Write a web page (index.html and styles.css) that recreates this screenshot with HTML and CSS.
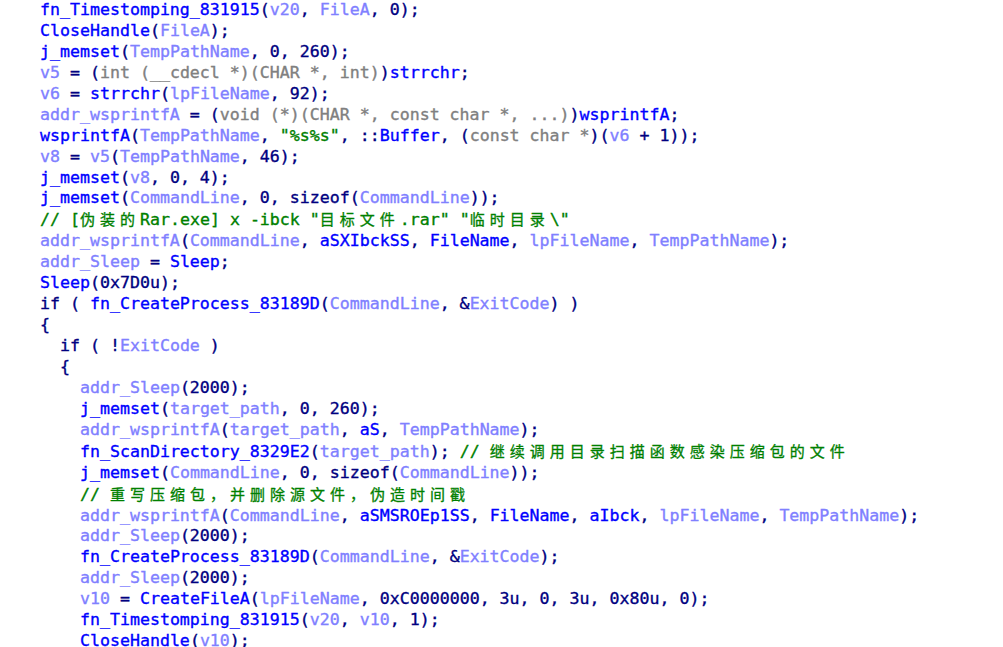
FILE: index.html
```html
<!DOCTYPE html>
<html>
<head>
<meta charset="utf-8">
<link rel="stylesheet" href="styles.css">
</head>
<body>
<pre class="code"><span class="b">fn_Timestomping_831915</span><span class="n">(</span><span class="v">v20</span><span class="n">, </span><span class="v">FileA</span><span class="n">, 0);</span>
<span class="b">CloseHandle</span><span class="n">(</span><span class="v">FileA</span><span class="n">);</span>
<span class="b">j_memset</span><span class="n">(</span><span class="v">TempPathName</span><span class="n">, 0, 260);</span>
<span class="v">v5</span><span class="n"> = (</span><span class="t">int (__cdecl *)(CHAR *, int)</span><span class="n">)</span><span class="b">strrchr</span><span class="n">;</span>
<span class="v">v6</span><span class="n"> = </span><span class="b">strrchr</span><span class="n">(</span><span class="v">lpFileName</span><span class="n">, 92);</span>
<span class="v">addr_wsprintfA</span><span class="n"> = (</span><span class="t">void (*)(CHAR *, const char *, ...)</span><span class="n">)</span><span class="b">wsprintfA</span><span class="n">;</span>
<span class="b">wsprintfA</span><span class="n">(</span><span class="v">TempPathName</span><span class="n">, </span><span class="s">"%s%s"</span><span class="n">, ::</span><span class="b">Buffer</span><span class="n">, (</span><span class="t">const char *</span><span class="n">)(</span><span class="v">v6</span><span class="n"> + 1));</span>
<span class="v">v8</span><span class="n"> = </span><span class="v">v5</span><span class="n">(</span><span class="v">TempPathName</span><span class="n">, 46);</span>
<span class="b">j_memset</span><span class="n">(</span><span class="v">v8</span><span class="n">, 0, 4);</span>
<span class="b">j_memset</span><span class="n">(</span><span class="v">CommandLine</span><span class="n">, 0, sizeof(</span><span class="v">CommandLine</span><span class="n">));</span>
<span class="c">// [<span class="z">伪装的</span>Rar.exe] x -ibck "<span class="z">目标文件</span>.rar" "<span class="z">临时目录</span>\"</span>
<span class="v">addr_wsprintfA</span><span class="n">(</span><span class="v">CommandLine</span><span class="n">, </span><span class="b">aSXIbckSS</span><span class="n">, </span><span class="b">FileName</span><span class="n">, </span><span class="v">lpFileName</span><span class="n">, </span><span class="v">TempPathName</span><span class="n">);</span>
<span class="v">addr_Sleep</span><span class="n"> = </span><span class="b">Sleep</span><span class="n">;</span>
<span class="b">Sleep</span><span class="n">(0x7D0u);</span>
<span class="n">if ( </span><span class="b">fn_CreateProcess_83189D</span><span class="n">(</span><span class="v">CommandLine</span><span class="n">, &amp;</span><span class="v">ExitCode</span><span class="n">) )</span>
<span class="n">{</span>
<span class="n">  if ( !</span><span class="v">ExitCode</span><span class="n"> )</span>
<span class="n">  {</span>
    <span class="v">addr_Sleep</span><span class="n">(2000);</span>
    <span class="b">j_memset</span><span class="n">(</span><span class="v">target_path</span><span class="n">, 0, 260);</span>
    <span class="v">addr_wsprintfA</span><span class="n">(</span><span class="v">target_path</span><span class="n">, </span><span class="b">aS</span><span class="n">, </span><span class="v">TempPathName</span><span class="n">);</span>
    <span class="b">fn_ScanDirectory_8329E2</span><span class="n">(</span><span class="v">target_path</span><span class="n">); </span><span class="c">// <span class="z">继续调用目录扫描函数感染压缩包的文件</span></span>
    <span class="b">j_memset</span><span class="n">(</span><span class="v">CommandLine</span><span class="n">, 0, sizeof(</span><span class="v">CommandLine</span><span class="n">));</span>
    <span class="c">// <span class="z">重写压缩包，并删除源文件，伪造时间戳</span></span>
    <span class="v">addr_wsprintfA</span><span class="n">(</span><span class="v">CommandLine</span><span class="n">, </span><span class="b">aSMSROEp1SS</span><span class="n">, </span><span class="b">FileName</span><span class="n">, </span><span class="b">aIbck</span><span class="n">, </span><span class="v">lpFileName</span><span class="n">, </span><span class="v">TempPathName</span><span class="n">);</span>
    <span class="v">addr_Sleep</span><span class="n">(2000);</span>
    <span class="b">fn_CreateProcess_83189D</span><span class="n">(</span><span class="v">CommandLine</span><span class="n">, &amp;</span><span class="v">ExitCode</span><span class="n">);</span>
    <span class="v">addr_Sleep</span><span class="n">(2000);</span>
    <span class="v">v10</span><span class="n"> = </span><span class="b">CreateFileA</span><span class="n">(</span><span class="v">lpFileName</span><span class="n">, 0xC0000000, 3u, 0, 3u, 0x80u, 0);</span>
    <span class="b">fn_Timestomping_831915</span><span class="n">(</span><span class="v">v20</span><span class="n">, </span><span class="v">v10</span><span class="n">, 1);</span>
    <span class="b">CloseHandle</span><span class="n">(</span><span class="v">v10</span><span class="n">);</span></pre>
</body>
</html>
```
FILE: styles.css
```css
html, body {
  margin: 0;
  padding: 0;
  background: #ffffff;
}
.code {
  margin: 0;
  padding: 0 0 0 40px;
  font-family: "DejaVu Sans Mono", "Liberation Mono", monospace;
  font-size: 16.6px;
  line-height: 20.93px;
  color: #000080;
  white-space: pre;
  -webkit-text-stroke: 0.35px currentColor;
}
.n { color: #000080; }
.b { color: #0000ff; }
.v { color: #8080ff; }
.t { color: #808080; }
.s { color: #008000; }
.c { color: #008000; }
.z {
  font-family: "Noto Sans CJK SC", sans-serif;
  font-size: 15px;
  letter-spacing: 5px;
  -webkit-text-stroke: 0.3px currentColor;
}
```
